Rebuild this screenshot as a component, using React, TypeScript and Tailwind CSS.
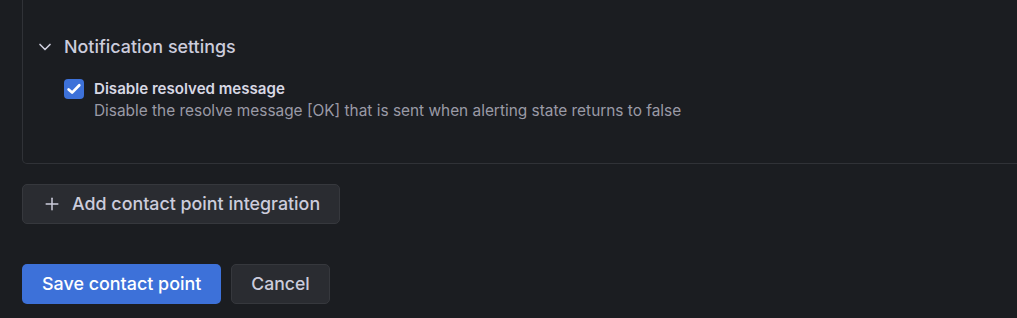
import { ChevronDown, Plus } from 'lucide-react'

export default function App() {
    return (
        <div className="w-[1017px] h-[318px] overflow-hidden bg-[#1b1d21] pl-[22px] text-[#ccccdc] font-['Inter',sans-serif]">
            {/* integration card, top edge is scrolled away */}
            <div className="w-[1100px] h-[164px] border-x border-b border-[#303237] rounded-b-[5px] pl-[12px] pt-[35px]">
                <div className="flex items-center h-6 gap-[9px]">
                    <ChevronDown className="w-5 h-5 text-[#ccccdc]" strokeWidth={2} />
                    <span className="text-[17.9px] font-medium leading-6">Notification settings</span>
                </div>
                <div className="flex items-start gap-[10px] mt-5 pl-[29px]">
                    <div className="w-5 h-5 rounded-[4px] bg-[#3d71d9] flex items-center justify-center shrink-0">
                        <svg width="16" height="16" viewBox="0 0 16 16" fill="none">
                            <path d="M2.6 8.4 6.1 11.6 13.3 4.2" stroke="white" strokeWidth="2.7" strokeLinecap="round" strokeLinejoin="round" />
                        </svg>
                    </div>
                    <div className="flex flex-col">
                        <span className="text-[15.1px] font-semibold leading-5 text-[#d8d8e4]">Disable resolved message</span>
                        <span className="text-[15.4px] leading-[24px] text-[#9a9aa6]">Disable the resolve message [OK] that is sent when alerting state returns to false</span>
                    </div>
                </div>
            </div>

            <button className="mt-5 h-10 flex items-center gap-[10px] pl-[19px] pr-[19px] rounded-[5px] bg-[#2a2c31] border border-[#36383d] text-[17.85px] font-medium text-[#ccccdc]">
                <Plus className="w-5 h-5" strokeWidth={1.8} />
                Add contact point integration
            </button>

            <div className="mt-10 flex gap-[10px]">
                <button className="h-10 px-5 rounded-[5px] bg-[#3d71d9] text-white text-[17.9px] font-medium">Save contact point</button>
                <button className="h-10 px-[19px] rounded-[5px] bg-[#2a2c31] border border-[#36383d] text-[#ccccdc] text-[17.6px] font-medium">Cancel</button>
            </div>
        </div>
    )
}
